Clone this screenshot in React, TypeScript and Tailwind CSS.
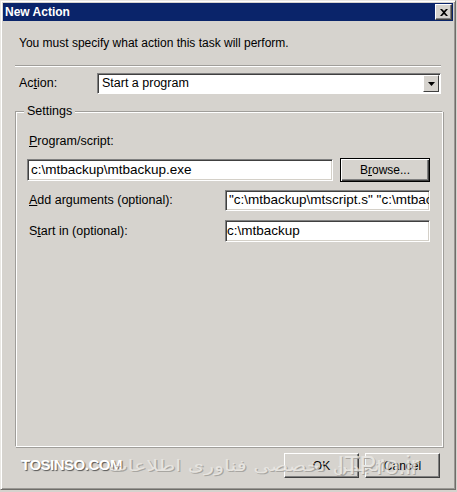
const FONT = "font-['Liberation_Sans','Noto_Sans',sans-serif]"

function SunkenInput({ value, className }: { value: string; className: string }) {
  return (
    <div
      className={`flex items-center overflow-hidden whitespace-nowrap border border-t-[#808080] border-l-[#808080] border-b-white border-r-white bg-white pl-[3px] text-[13.5px] text-black shadow-[inset_1px_1px_0_#404040,inset_-1px_-1px_0_#d4d0c8] ${className}`}
    >
      {value}
    </div>
  )
}

function RaisedButton({
  children,
  isDefault,
  className
}: {
  children: React.ReactNode
  isDefault?: boolean
  className: string
}) {
  return (
    <div
      className={`flex items-center justify-center text-[12px] text-black ${
        isDefault
          ? 'border border-black shadow-[inset_1px_1px_0_#fff,inset_-1px_-1px_0_#404040,inset_-2px_-2px_0_#808080]'
          : 'border border-t-white border-l-white border-b-[#404040] border-r-[#404040] shadow-[inset_-1px_-1px_0_#808080]'
      } bg-[#d6d3ce] ${className}`}
    >
      {children}
    </div>
  )
}

export default function App() {
  return (
    <div className={`relative h-[492px] w-[457px] overflow-hidden bg-[#d6d3ce] ${FONT}`}>
      {/* window frame */}
      <div className="flex h-[490px] w-[456px] flex-col border border-t-[#e9e7e3] border-l-[#e9e7e3] border-b-[#6f6d69] border-r-[#6f6d69] p-[2px] shadow-[inset_1px_1px_0_#fff,inset_-1px_-1px_0_#9a9894]">
        {/* title bar */}
        <div className="flex h-[18px] shrink-0 items-center justify-between bg-[#0a246a] pl-[2px] pr-[1px]">
          <span className="text-[12px] font-bold leading-none text-white">New Action</span>
          <div className="flex h-[16px] w-[17px] items-center justify-center border border-t-white border-l-white border-b-[#404040] border-r-[#404040] bg-[#d6d3ce] shadow-[inset_-1px_-1px_0_#808080]">
            <svg width="8" height="7" viewBox="0 0 8 7">
              <path d="M0 0h2l2 2 2-2h2L5 3.5 8 7H6L4 5 2 7H0l3-3.5z" fill="#000" />
            </svg>
          </div>
        </div>

        {/* body */}
        <div className="flex flex-1 flex-col px-[12px]">
          <p className="mt-[14px] pl-[4px] text-[12px] leading-[16px] text-black">
            You must specify what action this task will perform.
          </p>

          <div className="mt-[14px] h-[2px] border-t border-t-[#a09e9a] border-b border-b-white" />

          {/* action row */}
          <div className="mt-[6px] flex items-center">
            <span className="w-[82px] pl-[4px] text-[12.5px] text-black">
              Ac<span className="underline">t</span>ion:
            </span>
            <div className="flex h-[21px] w-[344px] items-center border border-t-[#808080] border-l-[#808080] border-b-white border-r-white bg-white shadow-[inset_1px_1px_0_#404040]">
              <span className="flex-1 pl-[4px] text-[12.5px] text-black">Start a program</span>
              <div className="mr-[1px] flex h-[17px] w-[16px] items-center justify-center border border-t-white border-l-white border-b-[#404040] border-r-[#404040] bg-[#d6d3ce]">
                <svg width="7" height="4" viewBox="0 0 7 4">
                  <path d="M0 0h7L3.5 4z" fill="#000" />
                </svg>
              </div>
            </div>
          </div>

          {/* settings group */}
          <div className="relative mt-[17px] h-[336px] w-[428px] border border-t-[#a09e9a] border-l-[#a09e9a] border-b-white border-r-white shadow-[inset_1px_1px_0_#fff,1px_1px_0_#a09e9a]">
            <span className="absolute -top-[9px] left-[8px] bg-[#d6d3ce] px-[3px] text-[12.5px] leading-[16px] text-black">
              Settings
            </span>
            <div className="flex flex-col px-[11px] pt-[21px]">
              <span className="pl-[2px] text-[12.5px] leading-[16px] text-black">
                <span className="underline">P</span>rogram/script:
              </span>
              <div className="mt-[9px] flex items-center">
                <SunkenInput value="c:\mtbackup\mtbackup.exe" className="h-[22px] w-[306px]" />
                <RaisedButton isDefault className="ml-[7px] h-[24px] w-[90px]">
                  B<span className="underline">r</span>owse...
                </RaisedButton>
              </div>
              <div className="mt-[8px] flex items-center">
                <span className="w-[198px] pl-[2px] text-[12.5px] text-black">
                  <span className="underline">A</span>dd arguments (optional):
                </span>
                <SunkenInput
                  value={'"c:\\mtbackup\\mtscript.s" "c:\\mtbackup\\mtbackup.log"'}
                  className="h-[21px] w-[205px]"
                />
              </div>
              <div className="mt-[9px] flex items-center">
                <span className="w-[198px] pl-[2px] text-[12.5px] text-black">
                  S<span className="underline">t</span>art in (optional):
                </span>
                <SunkenInput value="c:\mtbackup" className="h-[22px] w-[205px] !pl-[1px]" />
              </div>
            </div>
          </div>

          {/* buttons */}
          <div className="mt-[6px] flex justify-end gap-[6px] pr-[1px]">
            <RaisedButton className="h-[25px] w-[75px]">OK</RaisedButton>
            <RaisedButton className="h-[25px] w-[75px]">Cancel</RaisedButton>
          </div>
        </div>
      </div>

      {/* watermark */}
      <div className="pointer-events-none absolute left-[21px] top-[453px] flex items-center whitespace-nowrap">
        <span className="text-[15px] font-bold tracking-[-0.5px] text-white [text-shadow:1px_1px_1px_#555]">
          TOSINSO.COM
        </span>
        <span
          dir="rtl"
          className="ml-[-14px] origin-left scale-x-[1.3] font-['DejaVu_Sans',sans-serif] text-[16px] text-[#ebe9e5] opacity-80 [text-shadow:1px_1px_0_#9d9b97]"
        >
          انجمن تخصصی فناوری اطلاعات
        </span>
        <span className="ml-[16px] text-[25px] leading-none text-[#ebe9e5] opacity-80 [text-shadow:1px_1px_0_#9d9b97]">
          ITPro.ir
        </span>
      </div>
    </div>
  )
}
